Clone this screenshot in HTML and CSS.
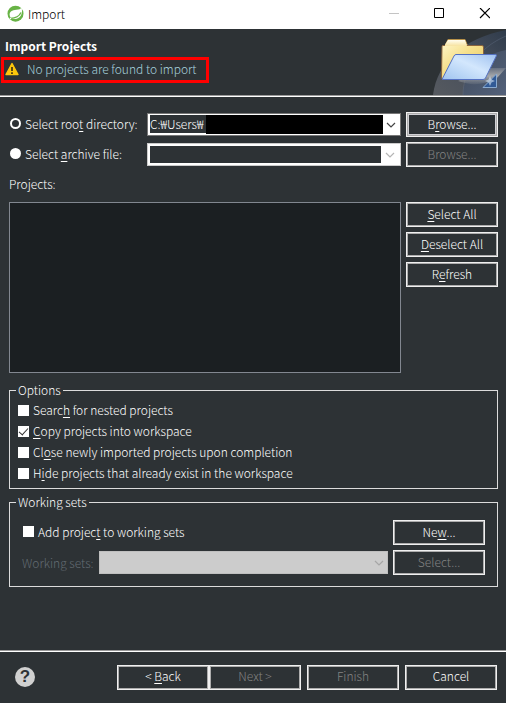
FILE: index.html
```html
<!DOCTYPE html>
<html lang="en">
<head>
<meta charset="utf-8">
<meta name="viewport" content="width=device-width, initial-scale=1">
<title>Import</title>
<link rel="stylesheet" href="styles.css">
</head>
<body>
<div class="window">
  <header class="titlebar">
    <svg class="app-icon" width="17" height="17" viewBox="0 0 17 17" aria-hidden="true">
      <circle cx="8.5" cy="8.7" r="8" fill="#68b346"/>
      <path d="M14.4 2.2C13.6 4 12.2 4.600 9.500 4.700C4.800 4.900 2.600 7 2.600 9.700C2.600 12.600 5 14.300 8 14.100C13 13.800 16.600 8.500 14.400 2.200Z" fill="#fff"/>
      <path d="M3.500 13.300C9 13.200 12.200 11.400 14 7.500" fill="none" stroke="#68b346" stroke-width="1.300"/>
      <circle cx="3.500" cy="13.600" r="0.800" fill="#fff"/>
    </svg>
    <h1 class="window-title">Import</h1>
    <div class="window-controls">
      <button class="control" type="button" aria-label="Minimize" disabled>
        <svg width="12" height="12" viewBox="0 0 12 12"><path d="M1 5.500H11" stroke="#c4c4c4"/></svg>
      </button>
      <button class="control" type="button" aria-label="Maximize">
        <svg width="12" height="12" viewBox="0 0 12 12"><path d="M1.500 0.500H10.500V9.500H1.500Z" fill="none" stroke="#000"/></svg>
      </button>
      <button class="control" type="button" aria-label="Close">
        <svg width="12" height="12" viewBox="0 0 12 12"><path d="M2 0L12 10M12 0L2 10" stroke="#000" stroke-width="1.200"/></svg>
      </button>
    </div>
  </header>

  <section class="banner">
    <div class="banner-text">
      <h2 class="banner-title">Import Projects</h2>
      <p class="message">
        <svg width="14" height="14" viewBox="0 0 14 14" aria-hidden="true">
          <path d="M7 1.500L13 12.500H1Z" fill="#fdc70c" stroke="#fdc70c" stroke-width="1.400" stroke-linejoin="round"/>
          <path d="M7 5V9M7 10.300V12" stroke="#4a3a10" stroke-width="1.800"/>
        </svg>
        <span>No projects are found to import</span>
      </p>
    </div>
    <svg class="banner-art" width="73" height="66" viewBox="0 0 73 66" aria-hidden="true">
      <defs>
        <linearGradient id="sweep" x1="0" y1="1" x2="1" y2="0"><stop offset="0" stop-color="#565a60"/><stop offset="0.600" stop-color="#454d5a"/><stop offset="1" stop-color="#2f3b4b"/></linearGradient>
        <linearGradient id="sweep2" x1="0" y1="0" x2="1" y2="1"><stop offset="0" stop-color="#3f4a5b"/><stop offset="1" stop-color="#53617a"/></linearGradient>
        <linearGradient id="tab" x1="0" y1="0" x2="0" y2="1"><stop offset="0" stop-color="#fffdf0"/><stop offset="1" stop-color="#f7e3a0"/></linearGradient>
        <linearGradient id="back" x1="0" y1="0" x2="1" y2="1"><stop offset="0" stop-color="#fdf4c4"/><stop offset="0.400" stop-color="#f6e08c"/><stop offset="1" stop-color="#e7c65d"/></linearGradient>
        <linearGradient id="front" x1="0" y1="1" x2="1" y2="0"><stop offset="0" stop-color="#a0c4ef"/><stop offset="0.550" stop-color="#d3e7fd"/><stop offset="1" stop-color="#9fc1f0"/></linearGradient>
        <linearGradient id="shadow" x1="0" y1="0" x2="0" y2="1"><stop offset="0" stop-color="#a5a7aa" stop-opacity="0.300"/><stop offset="0.500" stop-color="#a5a7aa"/><stop offset="1" stop-color="#8b9098" stop-opacity="0.200"/></linearGradient>
      </defs>
      <path d="M0 66C4 33 31 9 73 1V66Z" fill="url(#sweep)"/>
      <path d="M30 66C31 45 44 27 73 21V66Z" fill="url(#sweep2)"/>
      <path d="M30 66C30 42 45 19 73 7" fill="none" stroke="#657086" stroke-opacity="0.400"/>
      <path d="M50 39H73L64 49C52 56 38 57 25 52Z" fill="url(#shadow)"/>
      <path d="M11 19L15 10.500H32L35.500 19Z" fill="url(#tab)" stroke="#b8924a"/>
      <path d="M9 17.500Q9 16.500 10 16.500H49Q50.500 16.500 50.500 18V49Q50.500 50.500 49 50.500H10L8.500 49Z" fill="url(#back)" stroke="#8a643e"/>
      <path d="M12 15.500L15 11H32L34 17H12Z" fill="url(#tab)"/>
      <path d="M23 25.500H62.500Q64 25.500 63.300 27L52.500 49Q51.800 50.500 50 50.500H10Q9 50.500 9.700 49L21 27Q21.800 25.500 23 25.500Z" fill="url(#front)" stroke="#5471c2"/>
      <path d="M63.500 45V58.500H50Z" fill="#315a96" stroke="#8babd0"/>
      <path d="M57 47L58.500 50.500L62 52L58.500 53.500L57 57L55.500 53.500L52 52L55.500 50.500Z" fill="#dbe8f5" fill-opacity="0.600"/>
    </svg>
  </section>

  <main class="content">
    <div class="sources">
      <label class="choice"><input class="radio" type="radio" name="source" checked><span>Select roo<u>t</u> directory:</span></label>
      <div class="combo">
        <input class="combo-input" type="text" value="C:₩Users₩" aria-label="Root directory">
        <span class="mask"></span>
        <button class="arrow" type="button" aria-label="Show directories"><svg width="10" height="6" viewBox="0 0 10 6"><path d="M1 1L5 5L9 1" fill="none" stroke="#444" stroke-width="1.200"/></svg></button>
      </div>
      <button class="button button-default" type="button">B<u>r</u>owse...</button>

      <label class="choice"><input class="radio" type="radio" name="source"><span>Select <u>a</u>rchive file:</span></label>
      <div class="combo combo-off">
        <input class="combo-input" type="text" aria-label="Archive file" disabled>
        <button class="arrow" type="button" aria-label="Show archives" disabled><svg width="10" height="6" viewBox="0 0 10 6"><path d="M1 1L5 5L9 1" fill="none" stroke="#b5b5b5" stroke-width="1.200"/></svg></button>
      </div>
      <button class="button" type="button" disabled>Browse...</button>
    </div>

    <h3 class="list-label" id="projects">Projects:</h3>
    <div class="projects">
      <div class="list" role="listbox" aria-labelledby="projects" tabindex="0"></div>
      <div class="actions">
        <button class="button" type="button"><u>S</u>elect All</button>
        <button class="button" type="button"><u>D</u>eselect All</button>
        <button class="button" type="button">R<u>e</u>fresh</button>
      </div>
    </div>

    <fieldset class="group">
      <legend>Options</legend>
      <div class="options">
        <label class="choice"><input class="check" type="checkbox"><span>Searc<u>h</u> for nested projects</span></label>
        <label class="choice"><input class="check" type="checkbox" checked><span><u>C</u>opy projects into workspace</span></label>
        <label class="choice"><input class="check" type="checkbox"><span>Cl<u>o</u>se newly imported projects upon completion</span></label>
        <label class="choice"><input class="check" type="checkbox"><span>H<u>i</u>de projects that already exist in the workspace</span></label>
      </div>
    </fieldset>

    <fieldset class="group">
      <legend>Working sets</legend>
      <div class="sets">
        <div class="sets-row">
          <label class="choice"><input class="check" type="checkbox"><span>Add projec<u>t</u> to working sets</span></label>
          <button class="button" type="button">Ne<u>w</u>...</button>
        </div>
        <div class="sets-row">
          <label class="muted" for="sets">Working sets:</label>
          <div class="select-box">
            <select id="sets" class="select" disabled><option></option></select>
            <svg class="select-arrow" width="10" height="6" viewBox="0 0 10 6" aria-hidden="true"><path d="M1 1L5 5L9 1" fill="none" stroke="#a6a6a6" stroke-width="1.200"/></svg>
          </div>
          <button class="button" type="button" disabled>Select...</button>
        </div>
      </div>
    </fieldset>
  </main>

  <footer class="footer">
    <button class="help" type="button" aria-label="Help">?</button>
    <div class="pager">
      <button class="button" type="button">&lt; <u>B</u>ack</button>
      <button class="button" type="button" disabled>Next &gt;</button>
    </div>
    <button class="button" type="button" disabled>Finish</button>
    <button class="button" type="button">Cancel</button>
  </footer>
</div>
</body>
</html>
```
FILE: styles.css
```css
* {
  box-sizing: border-box;
}

body,
button,
input,
select {
  font: 300 12px/18px "Noto Sans CJK KR", "Noto Sans", sans-serif;
  color: #fff;
}

body {
  margin: 0;
  background: #2d3235;
}

h1,
h2,
h3,
p {
  margin: 0;
  font-size: 12px;
  font-weight: 300;
}

button,
input,
select {
  margin: 0;
  padding: 0;
  border: 0;
  border-radius: 0;
  background: none;
}

u {
  text-underline-offset: 2px;
}

.window {
  display: flex;
  flex-direction: column;
  min-height: 100vh;
}

.titlebar {
  display: flex;
  align-items: center;
  height: 29px;
  padding: 0 0 2px 7px;
  background: #fff;
}

.window-title {
  flex: 1;
  margin-left: 4px;
  color: #000;
}

.window-controls {
  display: flex;
}

.control {
  display: grid;
  place-items: center;
  width: 45px;
  height: 26px;
}

.banner {
  display: flex;
  justify-content: space-between;
  height: 68px;
  border-bottom: 1px solid #fff;
  box-shadow: inset 0 -1px #999;
}

.banner-text {
  padding: 8px 0 0 1px;
}

.banner-title {
  padding-left: 4px;
  font-weight: 700;
}

.message {
  display: flex;
  align-items: center;
  gap: 8px;
  height: 26px;
  margin-top: 2px;
  padding: 0 9px 2px 1px;
  border: 3px solid #f00;
  color: #a6d0dc;
}

.content {
  flex: 1;
  padding: 15px 8px 16px 9px;
}

.sources {
  display: grid;
  grid-template-columns: 133px 1fr 92px;
  align-items: center;
  gap: 5px;
}

.choice {
  display: flex;
  align-items: center;
  gap: 4px;
  white-space: nowrap;
}

.sources .choice {
  padding: 0 0 2px 1px;
}

.radio,
.check {
  appearance: none;
  flex: none;
  width: 11px;
  height: 11px;
  background: #fff;
}

.radio {
  border-radius: 50%;
}

.radio:checked {
  border: 2px solid #fff;
  background: #2d3235;
}

.check:checked {
  position: relative;
}

.check:checked::after {
  content: "";
  position: absolute;
  left: 3px;
  top: 0;
  width: 4px;
  height: 8px;
  border: solid #333;
  border-width: 0 1px 1px 0;
  transform: rotate(42deg);
}

.combo {
  display: flex;
  height: 23px;
  padding: 1px;
  border: 1px solid #777;
  background: #fff;
}

.combo-input {
  width: 56px;
  height: 18px;
  margin-left: 1px;
  background: #2d3235;
}

.mask {
  flex: 1;
  height: 19px;
  background: #000;
}

.arrow {
  display: grid;
  place-items: center;
  width: 16px;
}

.combo-off {
  padding: 2px 1px 2px 2px;
  border-color: #ccc;
}

.combo-off .combo-input {
  flex: 1;
  margin: 0;
  height: 17px;
}

.combo-off .arrow {
  width: 18px;
}

.button {
  flex: none;
  width: 92px;
  height: 25px;
  padding-bottom: 2px;
  border: 1px solid #f0f0f0;
  background: #2d3235;
  box-shadow: inset 0 0 0 1px #adadad;
}

.button:disabled {
  color: #838383;
}

.button-default {
  outline: 1px solid #d0d0d4;
  outline-offset: -3px;
  box-shadow: inset 0 0 0 1px #adadad;
}

.list-label {
  margin: 8px 0 9px;
}

.projects {
  display: grid;
  grid-template-columns: 1fr 92px;
  gap: 5px;
}

.list {
  min-height: 171px;
  border: 1px solid #828790;
  background: #1b1f22;
}

.actions {
  display: flex;
  flex-direction: column;
  gap: 5px;
}

.group {
  min-width: 0;
  margin: 8px 0 0;
  padding: 0;
  border: 1px solid #dcdcdc;
}

.group + .group {
  margin-top: 4px;
}

.group legend {
  margin-left: 6px;
  padding: 0 2px;
}

.options {
  display: grid;
  gap: 3px;
  padding: 2px 8px 6px;
}

.sets {
  display: grid;
  gap: 5px;
  padding: 9px 12px 11px;
}

.sets-row {
  display: flex;
  align-items: center;
  justify-content: space-between;
  gap: 5px;
}

.sets-row .choice {
  padding: 0 0 2px 1px;
}

.muted {
  width: 72px;
  color: #626b72;
  white-space: nowrap;
}

.select-box {
  position: relative;
  flex: 1;
  height: 23px;
}

.select {
  appearance: none;
  width: 100%;
  height: 100%;
  border: 1px solid #bfbfbf;
  background: #ccc;
  opacity: 1;
}

.select-arrow {
  position: absolute;
  right: 4px;
  top: 9px;
}

.footer {
  display: flex;
  align-items: center;
  gap: 6px;
  height: 53px;
  padding: 0 9px 0 15px;
  border-top: 1px solid #999;
  box-shadow: inset 0 1px #fff;
}

.help {
  width: 20px;
  height: 20px;
  margin-right: auto;
  border-radius: 50%;
  background: #d0d0d0;
  color: #2d3235;
  font: 700 17px/20px "Liberation Sans", sans-serif;
}

.pager {
  display: flex;
}
```
